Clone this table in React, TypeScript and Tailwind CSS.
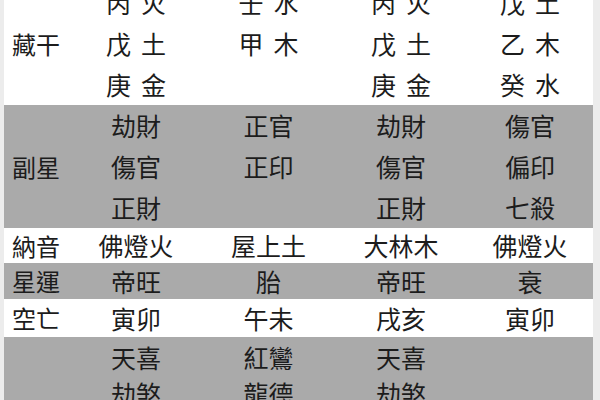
import React from "react";

type Section = {
  label: string;
  bg: string;
  lineH: string;
  pad: string;
  cols: string[][];
};

const sections: Section[] = [
  {
    label: "藏干",
    bg: "bg-white",
    lineH: "h-[41px]",
    pad: "py-0",
    cols: [
      ["丙火", "戊土", "庚金"],
      ["壬水", "甲木"],
      ["丙火", "戊土", "庚金"],
      ["戊土", "乙木", "癸水"],
    ],
  },
  {
    label: "副星",
    bg: "bg-[#aaaaaa]",
    lineH: "h-[41px]",
    pad: "py-0",
    cols: [
      ["劫財", "傷官", "正財"],
      ["正官", "正印"],
      ["劫財", "傷官", "正財"],
      ["傷官", "偏印", "七殺"],
    ],
  },
  {
    label: "納音",
    bg: "bg-white",
    lineH: "h-[35px]",
    pad: "py-0",
    cols: [["佛燈火"], ["屋上土"], ["大林木"], ["佛燈火"]],
  },
  {
    label: "星運",
    bg: "bg-[#aaaaaa]",
    lineH: "h-[36px]",
    pad: "py-0",
    cols: [["帝旺"], ["胎"], ["帝旺"], ["衰"]],
  },
  {
    label: "空亡",
    bg: "bg-white",
    lineH: "h-[38px]",
    pad: "py-0",
    cols: [["寅卯"], ["午未"], ["戌亥"], ["寅卯"]],
  },
  {
    label: "",
    bg: "bg-[#aaaaaa]",
    lineH: "h-[36px]",
    pad: "pt-[2px] pb-[20px]",
    cols: [["天喜", "劫煞"], ["紅鸞", "龍德"], ["天喜", "劫煞"], []],
  },
];

function Cell({ text, spaced, lineH }: { text: string; spaced: boolean; lineH: string }) {
  return (
    <div className={`flex items-center justify-center ${lineH}`}>
      {spaced ? (
        <span className="flex gap-[10px]">
          {Array.from(text).map((c, i) => (
            <span key={i}>{c}</span>
          ))}
        </span>
      ) : (
        <span>{text}</span>
      )}
    </div>
  );
}

export default function App() {
  return (
    <div
      className="w-[600px] h-[400px] overflow-hidden bg-[#ececec] text-[25px] leading-none text-[#1c1c1c]"
      style={{ fontFamily: '"Noto Sans CJK TC", "Noto Sans", sans-serif' }}
    >
      <div className="ml-[4px] w-[589px] -mt-[18px]">
        {sections.map((s, si) => (
          <div
            key={si}
            className={`grid grid-cols-[66px_132px_133px_132px_126px] ${s.bg} ${s.pad}`}
          >
            <div className="flex items-center pl-[8px] text-[24px]">{s.label}</div>
            {s.cols.map((col, ci) => (
              <div key={ci} className="flex flex-col">
                {col.map((t, ti) => (
                  <Cell key={ti} text={t} spaced={si === 0} lineH={s.lineH} />
                ))}
              </div>
            ))}
            {s.cols.length < 4 && <div />}
          </div>
        ))}
      </div>
    </div>
  );
}
